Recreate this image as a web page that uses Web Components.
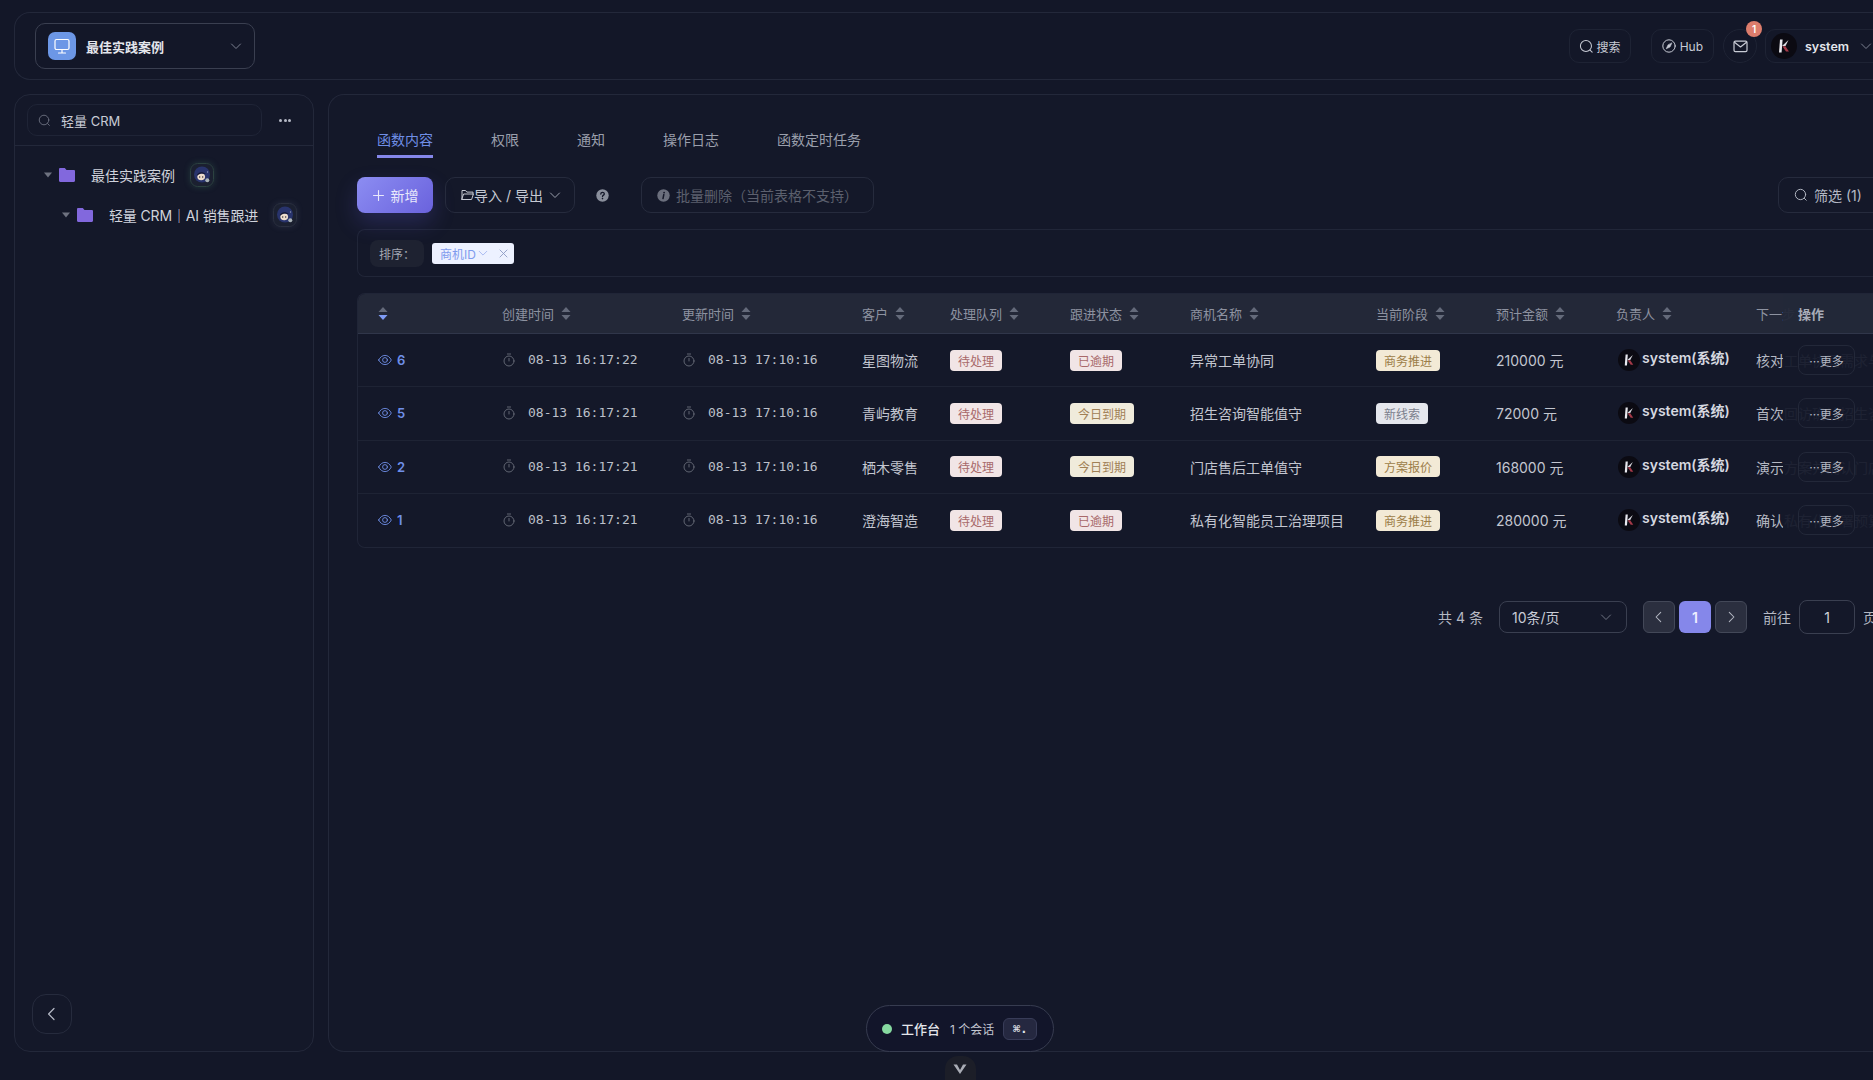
<!DOCTYPE html>
<html lang="zh-CN">
<head>
<meta charset="utf-8">
<title>轻量 CRM</title>
<style>
  html, body { margin: 0; height: 1080px; overflow: hidden; background: #131728; }
  body { font-family: Inter, "Noto Sans CJK SC", sans-serif; color: #d3d6df; font-size: 13px; }
</style>
</head>
<body>
<crm-app></crm-app>
<script>
const svg = (w, h, vb, body, extra = "") =>
  `<svg width="${w}" height="${h}" viewBox="${vb}" fill="none" stroke="currentColor" stroke-linecap="round" stroke-linejoin="round" ${extra}>${body}</svg>`;

const icons = {
  search: (s = 14) => svg(s, s, "0 0 16 16", `<circle cx="7.4" cy="7.4" r="5.9" stroke-width="1.1"/><path d="M11.8 11.8l2.2 2.2" stroke-width="1.1"/>`),
  chevronDown: (s = 12) => svg(s, s, "0 0 12 12", `<path d="M1.5 4l4.5 4.5L10.5 4" stroke-width="1"/>`),
  chevronLeft: (s = 14) => svg(s, s, "0 0 14 14", `<path d="M9 1.5L3.6 7 9 12.5" stroke-width="1.2"/>`),
  chevronRight: (s = 14) => svg(s, s, "0 0 14 14", `<path d="M5 1.5L10.4 7 5 12.5" stroke-width="1.2"/>`),
  monitor: svg(18, 18, "0 0 18 18", `<rect x="2" y="2.5" width="14" height="10" rx="1.5" stroke-width="1.2"/><path d="M9 12.5V16M5.5 16h7" stroke-width="1.2"/>`),
  compass: svg(14, 14, "0 0 14 14", `<circle cx="7" cy="7" r="6.2" stroke-width="1"/><path d="M9.8 4.200L8 8 4.200 9.800 6 6z" fill="currentColor" stroke-width=".6"/>`),
  mail: svg(15, 13, "0 0 15 13", `<rect x="1" y="1.2" width="13" height="10.4" rx="1.4" stroke-width="1.2"/><path d="M1.5 2.2L7.5 7l6-4.8" stroke-width="1.2"/>`),
  folder: svg(16, 14, "0 0 16 14", `<path d="M0 1.2C0 .5.5 0 1.2 0h4.6l1.7 1.9h7.3c.7 0 1.2.5 1.2 1.2v9.7c0 .7-.5 1.2-1.2 1.2H1.2C.5 14 0 13.5 0 12.8z" fill="#8268dd" stroke="none"/>`),
  caret: svg(8, 6, "0 0 8 6", `<path d="M0 .5h8L4 5.5z" fill="#6e7280" stroke="none"/>`),
  openFolder: svg(13, 12, "0 0 13 12", `<path d="M1 10.5V1.5h3.6l1.2 1.6H12v2M1 10.5h9.6L12.4 5H3z" stroke-width="1"/>`),
  plus: svg(13, 13, "0 0 13 13", `<path d="M6.5 1.5v10M1.5 6.5h10" stroke-width="1.1"/>`),
  help: svg(13, 13, "0 0 13 13", `<circle cx="6.5" cy="6.5" r="6.2" fill="#8a8f9c" stroke="none"/><path d="M4.8 5.1c0-2.2 3.5-2.2 3.5-.2 0 1.2-1.8 1.3-1.8 2.6" stroke="#141829" stroke-width="1.3"/><circle cx="6.5" cy="9.6" r=".8" fill="#141829" stroke="none"/>`),
  info: svg(13, 13, "0 0 13 13", `<circle cx="6.5" cy="6.5" r="6.2" fill="#6b6f7d" stroke="none"/><path d="M6.8 5.6L6 9.6" stroke="#141829" stroke-width="1.5"/><circle cx="7.1" cy="3.6" r=".9" fill="#141829" stroke="none"/>`),
  close: svg(9, 9, "0 0 9 9", `<path d="M1 1l7 7M8 1L1 8" stroke-width=".9"/>`),
  eye: svg(14, 12, "0 0 14 12", `<path d="M.7 6C2.2 3 4.4 1.4 7 1.4S11.8 3 13.3 6C11.8 9 9.6 10.6 7 10.6S2.2 9 .7 6z" stroke-width=".9"/><circle cx="7" cy="6" r="2.4" stroke-width=".9"/>`),
  timer: svg(12, 14, "0 0 12 14", `<circle cx="6" cy="8" r="5" stroke-width=".9"/><path d="M6 5.4V8M4.4 1h3.2" stroke-width=".9"/>`),
  vee: svg(16, 12, "0 0 16 12", `<path d="M1.500 1.500h3.500L8 7l3-5.500h3.500L8 11z" fill="currentColor" stroke="none"/>`),
  sort: (active) => `<svg width="10" height="13" viewBox="0 0 10 13"><path d="M5 0l4.500 5H.5z" fill="#646a7a"/><path d="M5 13L.5 8h9z" fill="${active ? "#7f9cf5" : "#646a7a"}"/></svg>`,
  logo: (s) => `<svg width="${s}" height="${s}" viewBox="0 0 26 26"><circle cx="13" cy="13" r="13" fill="#0b0a12"/><path d="M9 6.500h2.600L10.600 19.500H8z" fill="#e8e8ee"/><path d="M11 13L17.500 7l-3 6z" fill="#d9d9e0"/><path d="M11.400 13.200h3L18 18.600h-3z" fill="#a53a48"/></svg>`,
  agent: (border) => `<svg width="24" height="24" viewBox="0 0 24 24"><rect x=".5" y=".5" width="23" height="23" rx="7" fill="#1b2030" stroke="${border}"/><circle cx="12" cy="11.500" r="8" fill="#28336c"/><ellipse cx="11.200" cy="13.800" rx="3.900" ry="3.400" fill="#ecdccd"/><path d="M6.800 12.800c.4-3.600 5.800-5 9-1.800-2.600.2-3.600-.4-4.800-.4-1.400.6-2.800 1.200-4.200 2.200z" fill="#141732"/><circle cx="9.700" cy="14" r=".7" fill="#26222c"/><circle cx="12.700" cy="14" r=".7" fill="#26222c"/><circle cx="17.500" cy="9" r=".7" fill="#8d96b8"/><circle cx="17.300" cy="17.300" r="2" fill="#aab3b8"/></svg>`
};

class CrmApp extends HTMLElement {
  constructor() {
    super();
    this.attachShadow({ mode: "open" });
    this.shadowRoot.innerHTML = `
    <style>
      :host { display: block; width: 1900px; height: 1080px; box-sizing: border-box; padding: 12px 0 0 14px; position: relative; }
      .body { display: flex; gap: 14px; margin-top: 15px; height: 958px; }
    </style>
    <crm-topbar></crm-topbar>
    <div class="body">
      <crm-sidebar></crm-sidebar>
      <crm-main></crm-main>
    </div>
    <crm-dock></crm-dock>`;
  }
}

class CrmTopbar extends HTMLElement {
  constructor() {
    super();
    this.attachShadow({ mode: "open" });
    this.shadowRoot.innerHTML = `
    <style>
      :host { display: flex; align-items: center; justify-content: space-between; height: 68px; box-sizing: border-box;
        padding: 0 20px; border: 1px solid #23283a; border-radius: 16px 0 0 16px; border-right: 0; margin-bottom: -1px; }
      .space { display: flex; align-items: center; width: 220px; height: 46px; box-sizing: border-box; padding: 0 12px;
        border: 1px solid #3a3f50; border-radius: 10px; color: #e4e6ec; font-size: 13px; font-weight: 600; }
      .space i { display: flex; align-items: center; justify-content: center; width: 28px; height: 28px; border-radius: 7px;
        background: #6c97e6; color: #fff; margin-right: 10px; }
      .space b { flex: 1; font-weight: 600; }
      .space span { color: #7b8090; display: flex; }
      .right { display: flex; align-items: center; }
      .btn { display: flex; align-items: center; gap: 4px; height: 34px; box-sizing: border-box; padding: 0 10px;
        border: 1px solid #1e2334; border-radius: 10px; color: #c8cbd5; font-size: 12px; }
      .find { margin-right: 20px; padding: 0 9px; gap: 3px; }
      .mail { position: relative; width: 34px; padding: 0; justify-content: center; border-radius: 17px; margin: 0 8px 0 9px; }
      .badge { position: absolute; top: -9px; right: -6px; width: 16px; height: 16px; border-radius: 50%; background: #dd7d6c;
        color: #fff; font-size: 10px; font-weight: 600; display: flex; align-items: center; justify-content: center; }
      .user { padding: 0 0 0 5px; width: 115px; gap: 8px; color: #e4e6ec; font-weight: 600; font-size: 12.5px; border-radius: 10px 0 0 10px; }
      .user span { flex: 1; }
      .user em { color: #7b8090; display: flex; margin-right: 7px; }
      .user svg:first-child { flex: none; }
    </style>
    <div class="space"><i>${icons.monitor}</i><b>最佳实践案例</b><span>${icons.chevronDown()}</span></div>
    <div class="right">
      <div class="btn find">${icons.search(15)}<span>搜索</span></div>
      <div class="btn">${icons.compass}<span>Hub</span></div>
      <div class="btn mail">${icons.mail}<span class="badge">1</span></div>
      <div class="btn user">${icons.logo(26)}<span>system</span><em>${icons.chevronDown()}</em></div>
    </div>`;
  }
}

class CrmTreeRow extends HTMLElement {
  constructor() {
    super();
    this.attachShadow({ mode: "open" });
    this.shadowRoot.innerHTML = `
    <style>
      :host { display: flex; align-items: center; height: 40px; color: #d0d3dc; font-size: 14px; white-space: nowrap; padding-left: var(--indent, 29px); }
      .caret { display: flex; width: 15px; }
      .folder { display: flex; margin-right: 16px; }
      .agent { display: flex; margin-left: var(--agent-gap, 15px); border-radius: 7px; box-shadow: 0 0 6px var(--glow, rgba(80, 150, 120, .25)); }
    </style>
    <span class="caret">${icons.caret}</span>
    <span class="folder">${icons.folder}</span>
    <slot></slot>
    <span class="agent">${icons.agent(this.getAttribute("ring") || "#2c4240")}</span>`;
  }
}

class CrmSidebar extends HTMLElement {
  constructor() {
    super();
    this.attachShadow({ mode: "open" });
    this.shadowRoot.innerHTML = `
    <style>
      :host { display: flex; flex-direction: column; flex: none; width: 300px; box-sizing: border-box;
        border: 1px solid #23283a; border-radius: 16px; background: #141829; }
      .top { display: flex; align-items: center; height: 51px; padding: 0 12px; box-sizing: border-box; border-bottom: 1px solid #23283a; }
      .search { display: flex; align-items: center; gap: 10px; width: 235px; height: 32px; box-sizing: border-box; padding: 0 10px;
        border: 1px solid #1f2436; border-radius: 10px; color: #c8cbd5; font-size: 13px; }
      .search svg { color: #6e7382; }
      .dots { margin-left: 17px; display: flex; gap: 1.5px; }
      .dots i { width: 3px; height: 3px; border-radius: 50%; background: #b6bac6; }
      .tree { flex: 1; padding-top: 9px; }
      .collapse { display: flex; align-items: center; justify-content: center; width: 40px; height: 40px; margin: 0 0 17px 17px; box-sizing: border-box;
        border: 1px solid #262b3d; border-radius: 14px; color: #b6bac6; }
    </style>
    <div class="top">
      <div class="search">${icons.search(13)}<span>轻量 CRM</span></div>
      <div class="dots"><i></i><i></i><i></i></div>
    </div>
    <div class="tree">
      <crm-tree-row>最佳实践案例</crm-tree-row>
      <crm-tree-row ring="#2b3040" style="--indent:47px;--agent-gap:15px;--glow:rgba(110,120,150,.2);letter-spacing:-.15px">轻量 CRM｜AI 销售跟进</crm-tree-row>
    </div>
    <div class="collapse">${icons.chevronLeft()}</div>`;
  }
}

class CrmTabs extends HTMLElement {
  constructor() {
    super();
    this.attachShadow({ mode: "open" });
    const tabs = ["函数内容", "权限", "通知", "操作日志", "函数定时任务"];
    this.shadowRoot.innerHTML = `
    <style>
      :host { display: flex; gap: 58px; height: 32px; padding-left: 20px; font-size: 14px; color: #9a9fac; }
      span { box-sizing: border-box; height: 32px; white-space: nowrap; line-height: 28px; }
      .on { color: #6f8ee6; border-bottom: 3px solid #8587ea; }
    </style>
    ${tabs.map((t, i) => `<span class="${i ? "" : "on"}">${t}</span>`).join("")}`;
  }
}

class CrmToolbar extends HTMLElement {
  constructor() {
    super();
    this.attachShadow({ mode: "open" });
    this.shadowRoot.innerHTML = `
    <style>
      :host { display: flex; align-items: center; height: 36px; margin-top: 19px; font-size: 14px; white-space: nowrap; }
      .add { display: flex; align-items: center; justify-content: center; gap: 6px; width: 76px; height: 36px; border-radius: 8px;
        background: linear-gradient(135deg, #8c8df2, #6a62dd); color: #e8e8fb; box-shadow: 0 10px 22px rgba(104, 96, 230, .22); }
      .box { display: flex; align-items: center; height: 36px; box-sizing: border-box; border: 1px solid #262b3d; border-radius: 10px; }
      .io { width: 130px; margin-left: 12px; padding-left: 15px; color: #c6c9d3; }
      .io span { margin: 0 6px 0 0; }
      .io em { display: flex; color: #9a9fac; }
      .help { display: flex; margin: 0 32px 0 21px; }
      .batch { width: 233px; padding-left: 15px; gap: 6px; color: #5c606e; }
      .filter { margin-left: auto; width: 102px; padding-left: 15px; gap: 6px; color: #b4b8c4; border-radius: 10px 0 0 10px; }
    </style>
    <div class="add">${icons.plus}<span>新增</span></div>
    <div class="box io">${icons.openFolder}<span>导入 / 导出</span><em>${icons.chevronDown()}</em></div>
    <span class="help">${icons.help}</span>
    <div class="box batch">${icons.info}<span>批量删除（当前表格不支持）</span></div>
    <div class="box filter">${icons.search(14)}<span>筛选 (1)</span></div>`;
  }
}

class CrmFilterbar extends HTMLElement {
  constructor() {
    super();
    this.attachShadow({ mode: "open" });
    this.shadowRoot.innerHTML = `
    <style>
      :host { display: flex; align-items: center; height: 48px; box-sizing: border-box; margin-top: 16px; padding: 0 12px;
        border: 1px solid #212638; border-radius: 8px 0 0 8px; border-right: 0; font-size: 12px; }
      .label { display: flex; align-items: center; justify-content: center; width: 54px; height: 27px; border-radius: 8px; background: #1e2231; color: #a3a7b3; margin-right: 8px; }
      .chip { display: flex; align-items: center; width: 82px; height: 21px; box-sizing: border-box; padding-left: 8px; border-radius: 3px; background: #edf1ff; color: #7f9bee; }
      .chip em { display: flex; margin-left: 2px; color: #9db1ee; }
      .chip i { display: flex; margin-left: auto; margin-right: 6px; color: #8d9bc4; }
    </style>
    <span class="label">排序：</span>
    <span class="chip">商机ID<em>${icons.chevronDown(10)}</em><i>${icons.close}</i></span>`;
  }
}

class CrmTag extends HTMLElement {
  constructor() {
    super();
    this.attachShadow({ mode: "open" });
    this.shadowRoot.innerHTML = `
    <style>
      :host { display: inline-flex; align-items: center; height: 21px; padding: 0 8px; border-radius: 4px; font-size: 12px; white-space: nowrap;
        background: var(--bg, #f1e5e6); color: var(--fg, #a8696a); vertical-align: middle; }
      :host([tone="warn"]) { --bg: #f0ebdb; --fg: #a08055; }
      :host([tone="gold"]) { --bg: #f3ead6; --fg: #9c7d48; }
      :host([tone="gray"]) { --bg: #e5e7ed; --fg: #7c808c; }
    </style>
    <slot></slot>`;
  }
}

const COLUMNS = "144px 180px 180px 88px 120px 120px 186px 120px 120px 140px 1fr";
const ROWS = [
  { id: 6, created: "08-13 16:17:22", client: "星图物流", status: ["已逾期", ""], name: "异常工单协同", stage: ["商务推进", "gold"], amount: "210000 元", next: "核对工单协同需求与交付排期安排" },
  { id: 5, created: "08-13 16:17:21", client: "青屿教育", status: ["今日到期", "warn"], name: "招生咨询智能值守", stage: ["新线索", "gray"], amount: "72000 元", next: "首次回访确认招生咨询需求范围" },
  { id: 2, created: "08-13 16:17:21", client: "栖木零售", status: ["今日到期", "warn"], name: "门店售后工单值守", stage: ["方案报价", "gold"], amount: "168000 元", next: "演示方案并确认门店报价细节" },
  { id: 1, created: "08-13 16:17:21", client: "澄海智造", status: ["已逾期", ""], name: "私有化智能员工治理项目", stage: ["商务推进", "gold"], amount: "280000 元", next: "确认私有化部署预算与合同条款" }
];

class CrmTable extends HTMLElement {
  constructor() {
    super();
    this.attachShadow({ mode: "open" });
    const head = ["", "创建时间", "更新时间", "客户", "处理队列", "跟进状态", "商机名称", "当前阶段", "预计金额", "负责人"];
    const time = (t) => `<div class="time"><span>${icons.timer}</span>${t}</div>`;
    this.shadowRoot.innerHTML = `
    <style>
      :host { display: block; margin-top: 16px; border: 1px solid #202537; border-right: 0; border-radius: 8px 0 0 8px; overflow: hidden; font-size: 14px; }
      .row { position: relative; display: grid; grid-template-columns: ${COLUMNS}; align-items: center; box-sizing: border-box; height: 53.25px; border-bottom: 1px solid #1e2334; white-space: nowrap; color: #c3c6d0; }
      .row:last-child { border-bottom: 0; }
      .head { height: 40px; background: #232838; color: #8d92a0; border-bottom: 1px solid #30364a; font-size: 13px; }
      .head > div { display: flex; align-items: center; gap: 7px; }
      .first { padding-left: 20px; }
      .row > .id { display: flex; align-items: center; gap: 5px; color: #6f8fe8; font-weight: 600; font-size: 13px; }
      .time { display: flex; align-items: center; gap: 13px; margin-left: 1px; font-family: "DejaVu Sans Mono", monospace; font-size: 13px; color: #bcc0ca; margin-top: -1px; }
      .time span { display: flex; color: #6a6e7b; }
      .owner { display: flex; align-items: center; gap: 2px; font-weight: 600; color: #d6d8e0; margin-left: 2px; font-size: 14px; }
      .owner b { font-weight: 600; margin-top: -6px; }
      .next { overflow: hidden; color: #b4b8c3; }
      .ops { position: absolute; top: 0; right: 0; bottom: 0; width: 97px; padding-left: 15px; box-sizing: border-box; display: flex; align-items: center;
        background: rgba(20, 24, 41, .94); }
      .head .ops { background: rgba(35, 40, 56, .95); color: #a8acb8; font-weight: 600; }
      .more { display: flex; align-items: center; justify-content: center; width: 57px; height: 30px; box-sizing: border-box; border: 1px solid #232839; border-radius: 8px; color: #b4b8c3; font-size: 12px; }
    </style>
    <div class="row head">
      <div class="first">${icons.sort(true)}</div>
      ${head.slice(1).map((h) => `<div>${h}${icons.sort(false)}</div>`).join("")}
      <div>下一步</div>
      <div class="ops">操作</div>
    </div>
    ${ROWS.map((r) => `<div class="row">
      <div class="first id">${icons.eye}<span>${r.id}</span></div>
      ${time(r.created)}
      ${time("08-13 17:10:16")}
      <div>${r.client}</div>
      <div><crm-tag>待处理</crm-tag></div>
      <div><crm-tag tone="${r.status[1]}">${r.status[0]}</crm-tag></div>
      <div>${r.name}</div>
      <div><crm-tag tone="${r.stage[1]}">${r.stage[0]}</crm-tag></div>
      <div>${r.amount}</div>
      <div class="owner">${icons.logo(22)}<b>system(系统)</b></div>
      <div class="next">${r.next}</div>
      <div class="ops"><span class="more">···更多</span></div>
    </div>`).join("")}`;
  }
}

class CrmPagination extends HTMLElement {
  constructor() {
    super();
    this.attachShadow({ mode: "open" });
    this.shadowRoot.innerHTML = `
    <style>
      :host { display: flex; align-items: center; justify-content: flex-end; height: 34px; margin-top: 52px; padding-right: 3px; font-size: 14px; color: #b4b8c3; white-space: nowrap; }
      .select { display: flex; align-items: center; justify-content: space-between; width: 128px; height: 32px; box-sizing: border-box; padding: 0 14px 0 12px; margin: 0 16px 0 16px;
        border: 1px solid #3a3f50; border-radius: 8px; color: #c8cbd5; }
      .select em { display: flex; color: #6e7382; }
      .page { display: flex; align-items: center; justify-content: center; width: 32px; height: 32px; box-sizing: border-box; border-radius: 6px; border: 1px solid #434858; background: #2b2f3f; color: #b4b8c3; }
      .page.on { background: #8587ea; border: 0; color: #eef; font-weight: 600; margin: 0 4px; }
      .go { margin: 0 8px 0 16px; }
      .input { display: flex; align-items: center; justify-content: center; width: 56px; height: 34px; box-sizing: border-box; border: 1px solid #3a3f50; border-radius: 8px; color: #d0d3dc; margin-right: 8px; }
    </style>
    <span>共 4 条</span>
    <div class="select"><span>10条/页</span><em>${icons.chevronDown()}</em></div>
    <div class="page">${icons.chevronLeft(12)}</div>
    <div class="page on">1</div>
    <div class="page">${icons.chevronRight(12)}</div>
    <span class="go">前往</span>
    <div class="input">1</div>
    <span>页</span>`;
  }
}

class CrmMain extends HTMLElement {
  constructor() {
    super();
    this.attachShadow({ mode: "open" });
    this.shadowRoot.innerHTML = `
    <style>
      :host { display: block; flex: 1; min-width: 0; box-sizing: border-box; padding: 31px 20px 0 28px; background: #141829;
        border: 1px solid #23283a; border-right: 0; border-radius: 16px 0 0 16px; }
    </style>
    <crm-tabs></crm-tabs>
    <crm-toolbar></crm-toolbar>
    <crm-filterbar></crm-filterbar>
    <crm-table></crm-table>
    <crm-pagination></crm-pagination>`;
  }
}

class CrmDock extends HTMLElement {
  constructor() {
    super();
    this.attachShadow({ mode: "open" });
    this.shadowRoot.innerHTML = `
    <style>
      :host { position: absolute; left: 866px; top: 1005px; width: 188px; display: flex; flex-direction: column; align-items: center; }
      .pill { display: flex; align-items: center; width: 188px; height: 47px; box-sizing: border-box; padding-left: 15px; border: 1px solid #373c50; border-radius: 24px; background: #12152a; white-space: nowrap; }
      .pill i { width: 10px; height: 10px; border-radius: 50%; background: #86d9a0; margin-right: 9px; flex: none; }
      .pill b { font-weight: 500; font-size: 13px; color: #e4e6ec; margin-right: 10px; }
      .pill span { font-size: 12px; color: #c3c6d0; margin-right: 9px; }
      .pill kbd { display: flex; align-items: center; justify-content: center; width: 34px; height: 22px; box-sizing: border-box; border: 1px solid #383c58; border-radius: 6px; background: #252840; font: 600 12px "DejaVu Sans Mono", monospace; color: #e0e2ea; }
      .knob { display: flex; align-items: center; justify-content: center; width: 31px; height: 26px; margin-top: 4px; border-radius: 13px 13px 0 0; background: #1c1e28; color: #a9acb5; }
    </style>
    <div class="pill"><i></i><b>工作台</b><span>1 个会话</span><kbd>⌘.</kbd></div>
    <div class="knob">${icons.vee}</div>`;
  }
}

customElements.define("crm-tag", CrmTag);
customElements.define("crm-tree-row", CrmTreeRow);
customElements.define("crm-topbar", CrmTopbar);
customElements.define("crm-sidebar", CrmSidebar);
customElements.define("crm-tabs", CrmTabs);
customElements.define("crm-toolbar", CrmToolbar);
customElements.define("crm-filterbar", CrmFilterbar);
customElements.define("crm-table", CrmTable);
customElements.define("crm-pagination", CrmPagination);
customElements.define("crm-main", CrmMain);
customElements.define("crm-dock", CrmDock);
customElements.define("crm-app", CrmApp);
</script>
</body>
</html>
